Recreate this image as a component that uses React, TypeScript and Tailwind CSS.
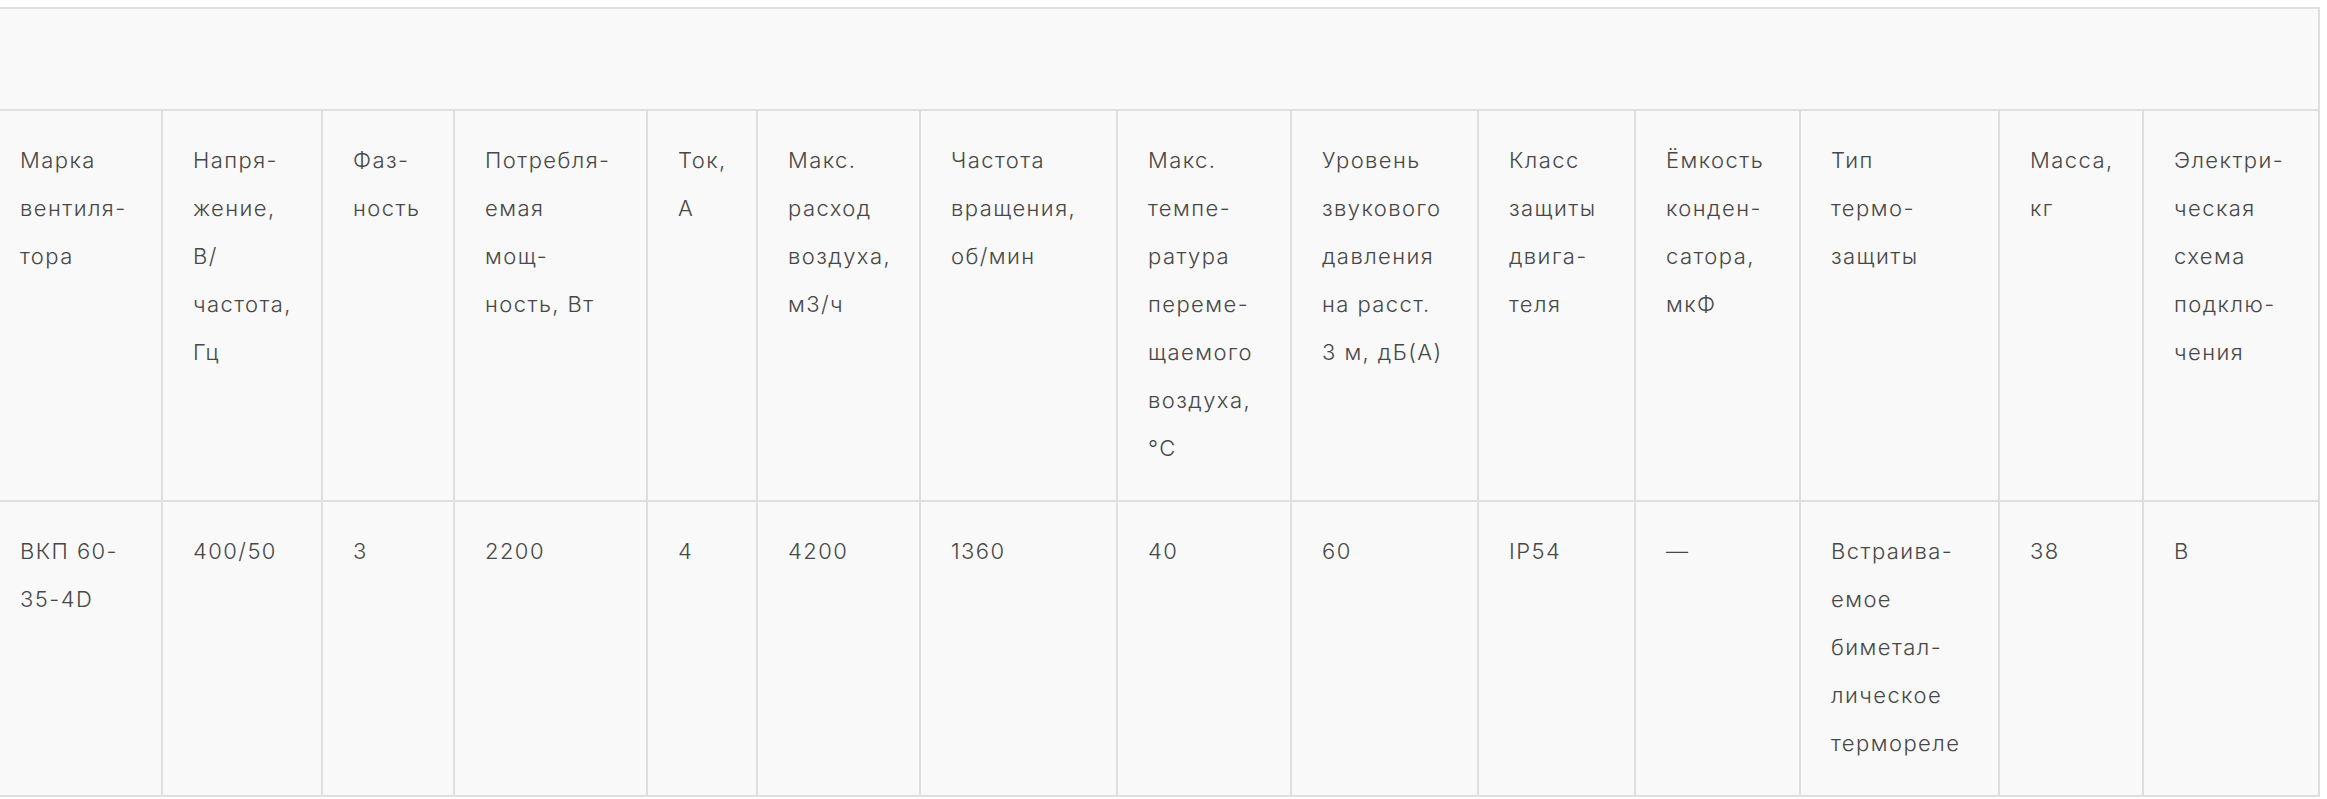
import React from 'react';

const COLS = 'grid-cols-[163px_160px_132px_193px_110px_163px_197px_174px_187px_157px_165px_199px_144px_176px]';

const headers: string[][] = [
  ['Марка', 'вентиля-', 'тора'],
  ['Напря-', 'жение,', 'В/', 'частота,', 'Гц'],
  ['Фаз-', 'ность'],
  ['Потребля-', 'емая', 'мощ-', 'ность, Вт'],
  ['Ток,', 'А'],
  ['Макс.', 'расход', 'воздуха,', 'м3/ч'],
  ['Частота', 'вращения,', 'об/мин'],
  ['Макс.', 'темпе-', 'ратура', 'переме-', 'щаемого', 'воздуха,', '°С'],
  ['Уровень', 'звукового', 'давления', 'на расст.', '3 м, дБ(А)'],
  ['Класс', 'защиты', 'двига-', 'теля'],
  ['Ёмкость', 'конден-', 'сатора,', 'мкФ'],
  ['Тип', 'термо-', 'защиты'],
  ['Масса,', 'кг'],
  ['Электри-', 'ческая', 'схема', 'подклю-', 'чения'],
];

const row: string[][] = [
  ['ВКП 60-', '35-4D'],
  ['400/50'],
  ['3'],
  ['2200'],
  ['4'],
  ['4200'],
  ['1360'],
  ['40'],
  ['60'],
  ['IP54'],
  ['—'],
  ['Встраива-', 'емое', 'биметал-', 'лическое', 'термореле'],
  ['38'],
  ['В'],
];

function Cell({ lines, first }: { lines: string[]; first: boolean }) {
  return (
    <div
      className={
        'border-r-2 border-b-2 border-[#dfdfdf] pt-[25px] pb-[28px] pr-[8px] whitespace-nowrap ' +
        (first ? 'pl-[20px]' : 'pl-[30px]')
      }
    >
      {lines.map((l, i) => (
        <div key={i}>{l}</div>
      ))}
    </div>
  );
}

export default function App() {
  return (
    <div className="min-h-screen bg-white pt-[7px]">
      <div
        className={`grid ${COLS} w-[2320px] bg-[#f9f9f9] border-t-2 border-[#dfdfdf] text-[22px] leading-[48px] font-light text-[#474747] tracking-[0.065em]`}
        style={{ fontFamily: 'Inter, "Open Sans", sans-serif' }}
      >
        {/* empty caption row */}
        <div className="col-span-14 h-[102px] border-r-2 border-b-2 border-[#dfdfdf]" />

        {headers.map((h, i) => (
          <Cell key={'h' + i} lines={h} first={i === 0} />
        ))}

        {row.map((c, i) => (
          <Cell key={'d' + i} lines={c} first={i === 0} />
        ))}
      </div>
    </div>
  );
}
